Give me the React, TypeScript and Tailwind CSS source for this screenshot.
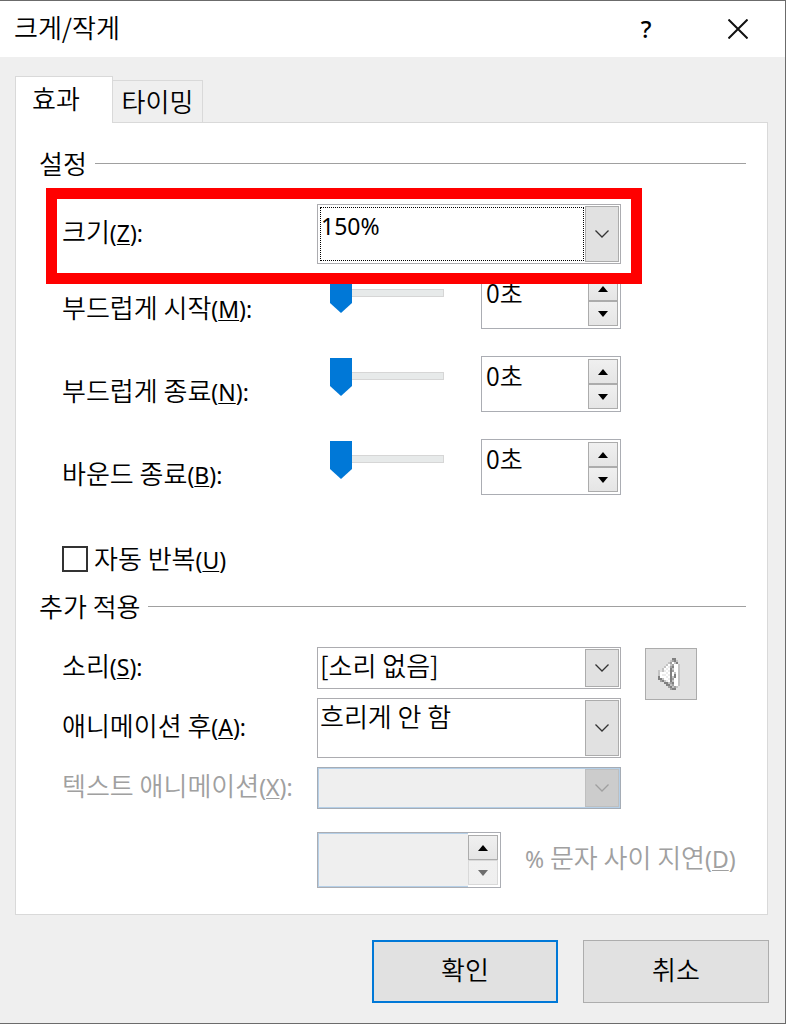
import React, { useState } from 'react';

const LATIN = "font-['Noto_Sans','Noto_Sans_CJK_KR',sans-serif] text-[23px] font-normal";
const HANGUL = "font-['Noto_Sans_CJK_KR',sans-serif] text-[26px] font-[350]";

// one character per 2px block: d = dark, m = mid, l = light, w = white, e = off-white
const SPEAKER = [
  '.......dd..',
  '......lmdl.',
  '.....lmwld.',
  '....lwlmwwl',
  '...lwemdwwl',
  '..lwewdlwwl',
  'l.lewedmwwl',
  'lwwwewdwlwl',
  'lweewedwdwl',
  'dwwwewdldwl',
  'ddlwwedmwwl',
  '.mdlewdlwwl',
  '...ddlmdwwl',
  '....ddlmwwl',
  '.....mdlml.',
  '......mdd..',
];

const SPEAKER_COLORS: Record<string, string> = {
  d: '#808080',
  m: '#a0a0a0',
  l: '#c3c3c3',
  e: '#ececec',
  w: '#ffffff',
};

function SpeakerIcon() {
  return (
    <svg width="22" height="32" viewBox="0 0 11 16" shapeRendering="crispEdges" aria-hidden="true">
      {SPEAKER.flatMap((row, y) =>
        row.split('').map((c, x) =>
          c === '.' ? null : <rect key={`${x}-${y}`} x={x} y={y} width="1" height="1" fill={SPEAKER_COLORS[c]} />
        )
      )}
    </svg>
  );
}

interface LabelProps {
  htmlFor: string;
  text: string;
  hotkey: string;
  colon?: boolean;
  className?: string;
}

function Label({ htmlFor, text, hotkey, colon = true, className = '' }: LabelProps) {
  return (
    <label htmlFor={htmlFor} className={`whitespace-nowrap leading-8 ${className}`}>
      {text}
      <span className={LATIN}>
        (<span className="underline decoration-1 underline-offset-2">{hotkey}</span>){colon && ':'}
      </span>
    </label>
  );
}

interface ComboProps {
  id: string;
  options: string[];
  className: string;
  selectClass?: string;
  disabled?: boolean;
}

function Combo({ id, options, className, selectClass = 'm-px', disabled = false }: ComboProps) {
  return (
    <div
      className={`flex border p-px ${
        disabled ? 'border-[#a5acb5] bg-[#b5cfe7]' : 'border-[#acacb0] bg-white'
      } ${className}`}
    >
      <select
        id={id}
        disabled={disabled}
        className={`min-w-0 flex-1 appearance-none outline-none ${
          disabled ? 'bg-[#efefef]' : 'bg-transparent text-black'
        } ${selectClass}`}
      >
        {options.map((o) => (
          <option key={o}>{o}</option>
        ))}
      </select>
      <span
        className={`flex w-[34px] items-center justify-center border ${
          disabled ? 'border-[#bfbfbf] bg-[#cccccc] text-[#a0a0a0]' : 'border-[#acacac] bg-[#e1e1e1] text-[#333]'
        }`}
      >
        <svg width="14" height="8" viewBox="0 0 14 8" fill="none" stroke="currentColor" strokeWidth="1.3" aria-hidden="true">
          <path d="M0.5 0.5 7 7l6.500-6.500" />
        </svg>
      </span>
    </div>
  );
}

interface SpinnerProps {
  id: string;
  initial: string;
  className: string;
  disabled?: boolean;
}

function Spinner({ id, initial, className, disabled = false }: SpinnerProps) {
  const [value, setValue] = useState(initial);

  const step = (delta: number) => {
    const next = Math.max(0, (parseFloat(value) || 0) + delta);
    setValue(`${next}초`);
  };

  return (
    <div className={`flex h-14 border border-[#abadb3] bg-white ${className}`}>
      <input
        id={id}
        type="text"
        value={value}
        disabled={disabled}
        onChange={(e) => setValue(e.target.value)}
        className={`min-w-0 flex-1 pb-4 pl-1 text-[25px] outline-none ${
          disabled ? 'border border-r-0 border-[#b5cfe7] bg-[#efefef]' : 'bg-white'
        }`}
      />
      <div className="my-0.5 mr-0.5 flex w-[30px] flex-col">
        <button
          type="button"
          aria-label="증가"
          onClick={() => step(1)}
          className="flex flex-1 items-center justify-center border border-[#acacac] bg-linear-to-b from-[#f0f0f0] to-[#e5e5e5]"
        >
          <svg width="10" height="6" viewBox="0 0 10 6" aria-hidden="true">
            <path d="M5 0 10 6H0z" />
          </svg>
        </button>
        <button
          type="button"
          aria-label="감소"
          disabled={disabled}
          onClick={() => step(-1)}
          className={`flex flex-1 items-center justify-center border bg-linear-to-b from-[#f0f0f0] ${
            disabled ? 'border-[#d9d9d9] to-[#efefef] text-[#6d6d6d]' : 'border-[#acacac] to-[#e5e5e5]'
          }`}
        >
          <svg width="10" height="6" viewBox="0 0 10 6" fill="currentColor" aria-hidden="true">
            <path d="M5 6 0 0h10z" />
          </svg>
        </button>
      </div>
    </div>
  );
}

function SliderRow({ id, text, hotkey }: { id: string; text: string; hotkey: string }) {
  return (
    <div className="grid h-[83px] grid-cols-[255px_1fr_125px] items-start">
      <Label htmlFor={id} text={text} hotkey={hotkey} className="pt-[18px]" />
      <div className="flex items-start justify-between pl-[13px]">
        <input
          type="range"
          aria-label={text}
          min={0}
          max={10}
          defaultValue={0}
          className="mt-0.5 h-9 w-[114px] appearance-none bg-transparent [&::-webkit-slider-runnable-track]:h-2 [&::-webkit-slider-runnable-track]:border [&::-webkit-slider-runnable-track]:border-[#d6d6d6] [&::-webkit-slider-runnable-track]:bg-[#e7eaea] [&::-webkit-slider-thumb]:-ml-px [&::-webkit-slider-thumb]:-mt-[15px] [&::-webkit-slider-thumb]:h-[38px] [&::-webkit-slider-thumb]:w-[22px] [&::-webkit-slider-thumb]:appearance-none [&::-webkit-slider-thumb]:bg-[#0078d7] [&::-webkit-slider-thumb]:[clip-path:polygon(0_0,100%_0,100%_74%,50%_100%,0_74%)]"
        />
        <Spinner id={id} initial="0초" className="w-[140px]" />
      </div>
    </div>
  );
}

function Heading({ children }: { children: React.ReactNode }) {
  return (
    <h2 className="flex items-center gap-2 font-[350] leading-8">
      {children}
      <span className="h-px flex-1 bg-[#a0a0a0]" />
    </h2>
  );
}

export default function App() {
  const [repeat, setRepeat] = useState(false);

  return (
    <div className={`flex min-h-screen flex-col border-y border-r border-[#6b6b6b] bg-[#efefef] text-black ${HANGUL}`}>
      <header className="flex h-14 items-center bg-white pl-3.5 pr-[37px]">
        <h1 className="flex-1 pb-1 leading-8">크게/작게</h1>
        <button type="button" aria-label="도움말" className="mr-[74px] w-4 font-['Noto_Sans',sans-serif] text-2xl font-medium">
          ?
        </button>
        <button type="button" aria-label="닫기">
          <svg width="20" height="20" viewBox="0 0 20 20" fill="none" stroke="#111" strokeWidth="2" aria-hidden="true">
            <path d="m0.500 0.500 19 19M19.500 0.500l-19 19" />
          </svg>
        </button>
      </header>

      <main className="flex flex-col pb-5 pl-[15px] pr-4 pt-[19px]">
        <div role="tablist" className="flex items-end">
          <button
            type="button"
            role="tab"
            aria-selected="true"
            className="relative -mb-px h-[47px] w-[98px] border border-b-0 border-[#d9d9d9] bg-white pb-1 pl-4 text-left leading-8"
          >
            효과
          </button>
          <button
            type="button"
            role="tab"
            aria-selected="false"
            className="h-[42px] w-[90px] border-r border-t border-[#d9d9d9] pb-0.5 text-center leading-8"
          >
            타이밍
          </button>
        </div>

        <form className="mr-px border border-[#d9d9d9] bg-white pb-[26px] pl-[23px] pr-[21px] pt-6">
          <Heading>설정</Heading>
          <div className="flex flex-col pl-[23px]">
            <div className="relative mb-[9px] mt-[25px] grid grid-cols-[255px_1fr_125px] items-center">
              <Label htmlFor="size" text="크기" hotkey="Z" className="pb-1" />
              <Combo
                id="size"
                options={['150%', '25%', '50%', '200%', '400%']}
                className="h-[60px]"
                selectClass={`m-px border border-dotted border-black pb-4 ${LATIN}`}
              />
              <div className="pointer-events-none absolute -bottom-5 -left-4 -top-4 right-[104px] z-10 border-[11px] border-[#ff0000]" />
            </div>
            <SliderRow id="smooth-start" text="부드럽게 시작" hotkey="M" />
            <SliderRow id="smooth-end" text="부드럽게 종료" hotkey="N" />
            <SliderRow id="bounce-end" text="바운드 종료" hotkey="B" />
            <div className="mb-[15px] mt-[21px] flex h-8 items-center gap-1.5">
              <input
                id="repeat"
                type="checkbox"
                checked={repeat}
                onChange={(e) => setRepeat(e.target.checked)}
                className="size-[26px] appearance-none border-2 border-[#333] bg-white checked:bg-[#333]"
              />
              <Label htmlFor="repeat" text="자동 반복" hotkey="U" colon={false} />
            </div>
          </div>

          <Heading>추가 적용</Heading>
          <div className="flex flex-col gap-[9px] pl-[23px] pt-[25px]">
            <div className="grid h-[42px] grid-cols-[255px_1fr_125px] items-start">
              <Label htmlFor="sound" text="소리" hotkey="S" className="pt-0.5" />
              <Combo
                id="sound"
                options={['[소리 없음]', '박수', '폭발']}
                className="h-[42px]"
                selectClass="-mt-1 mb-px ml-px mr-px pb-1"
              />
              <button
                type="button"
                aria-label="음량"
                className="ml-6 mt-px flex size-[52px] items-center justify-center border border-[#acacac] bg-[#e1e1e1] pr-1"
              >
                <SpeakerIcon />
              </button>
            </div>
            <div className="grid grid-cols-[255px_1fr_125px] items-center">
              <Label htmlFor="after" text="애니메이션 후" hotkey="A" className="pb-1" />
              <Combo
                id="after"
                options={['흐리게 안 함', '애니메이션 후 숨기기']}
                className="h-[60px]"
                selectClass="-mt-1 mb-px ml-px mr-px pb-5"
              />
            </div>
            <div className="grid grid-cols-[255px_1fr_125px] items-center">
              <Label htmlFor="text-anim" text="텍스트 애니메이션" hotkey="X" className="pb-1 text-[#a0a0a0]" />
              <Combo id="text-anim" options={['']} className="h-[42px]" selectClass="m-0" disabled />
            </div>
            <div className="mt-3.5 flex items-center gap-6 pl-[255px]">
              <Spinner id="delay" initial="" className="w-[184px]" disabled />
              <label htmlFor="delay" className="whitespace-nowrap pb-1 leading-8 text-[#a0a0a0]">
                <span className={LATIN}>%</span> 문자 사이 지연
                <span className={LATIN}>
                  (<span className="underline decoration-1 underline-offset-2">D</span>)
                </span>
              </label>
            </div>
          </div>
        </form>

        <div className="flex justify-end gap-[25px] pt-[25px]">
          <button type="button" className="h-[63px] w-[186px] border-2 border-[#0078d7] bg-[#e1e1e1] pb-1.5">
            확인
          </button>
          <button type="button" className="h-[63px] w-[186px] border border-[#adadad] bg-[#e1e1e1] pb-1.5">
            취소
          </button>
        </div>
      </main>
    </div>
  );
}
